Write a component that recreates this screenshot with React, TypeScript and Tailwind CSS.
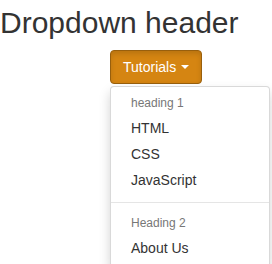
export default function App() {
  const font = { fontFamily: '"Liberation Sans", Arial, sans-serif' };
  return (
    <div className="w-[272px] h-[264px] bg-white overflow-hidden text-[#333]" style={font}>
      <h2 className="text-[30px] leading-[33px] font-normal mt-[6px] mb-[11px] text-[#333]">Dropdown header</h2>
      <div className="relative ml-[110px] w-[92px]">
        <button className="flex items-center gap-[5px] h-[34px] px-[12px] rounded-[4px] border border-[#985f0d] bg-[#d58512] text-white text-[14px] leading-[20px] shadow-[inset_0_3px_5px_rgba(0,0,0,0.125)]">
          <span>Tutorials</span>
          <span className="inline-block w-0 h-0 border-t-[4px] border-t-white border-x-[4px] border-x-transparent"></span>
        </button>
        <ul className="absolute left-0 top-full mt-[2px] w-[160px] py-[5px] bg-white border border-[rgba(0,0,0,0.15)] rounded-[4px] shadow-[0_6px_12px_rgba(0,0,0,0.175)] text-[14px]">
          <li className="px-[20px] py-[3px] text-[12px] leading-[17px] text-[#777]">heading 1</li>
          <li className="px-[20px] py-[3px] leading-[20px] text-[#333]">HTML</li>
          <li className="px-[20px] py-[3px] leading-[20px] text-[#333]">CSS</li>
          <li className="px-[20px] py-[3px] leading-[20px] text-[#333]">JavaScript</li>
          <li className="h-px my-[9px] bg-[#e5e5e5]"></li>
          <li className="px-[20px] py-[3px] text-[12px] leading-[17px] text-[#777]">Heading 2</li>
          <li className="px-[20px] py-[3px] leading-[20px] text-[#333]">About Us</li>
        </ul>
      </div>
    </div>
  );
}
